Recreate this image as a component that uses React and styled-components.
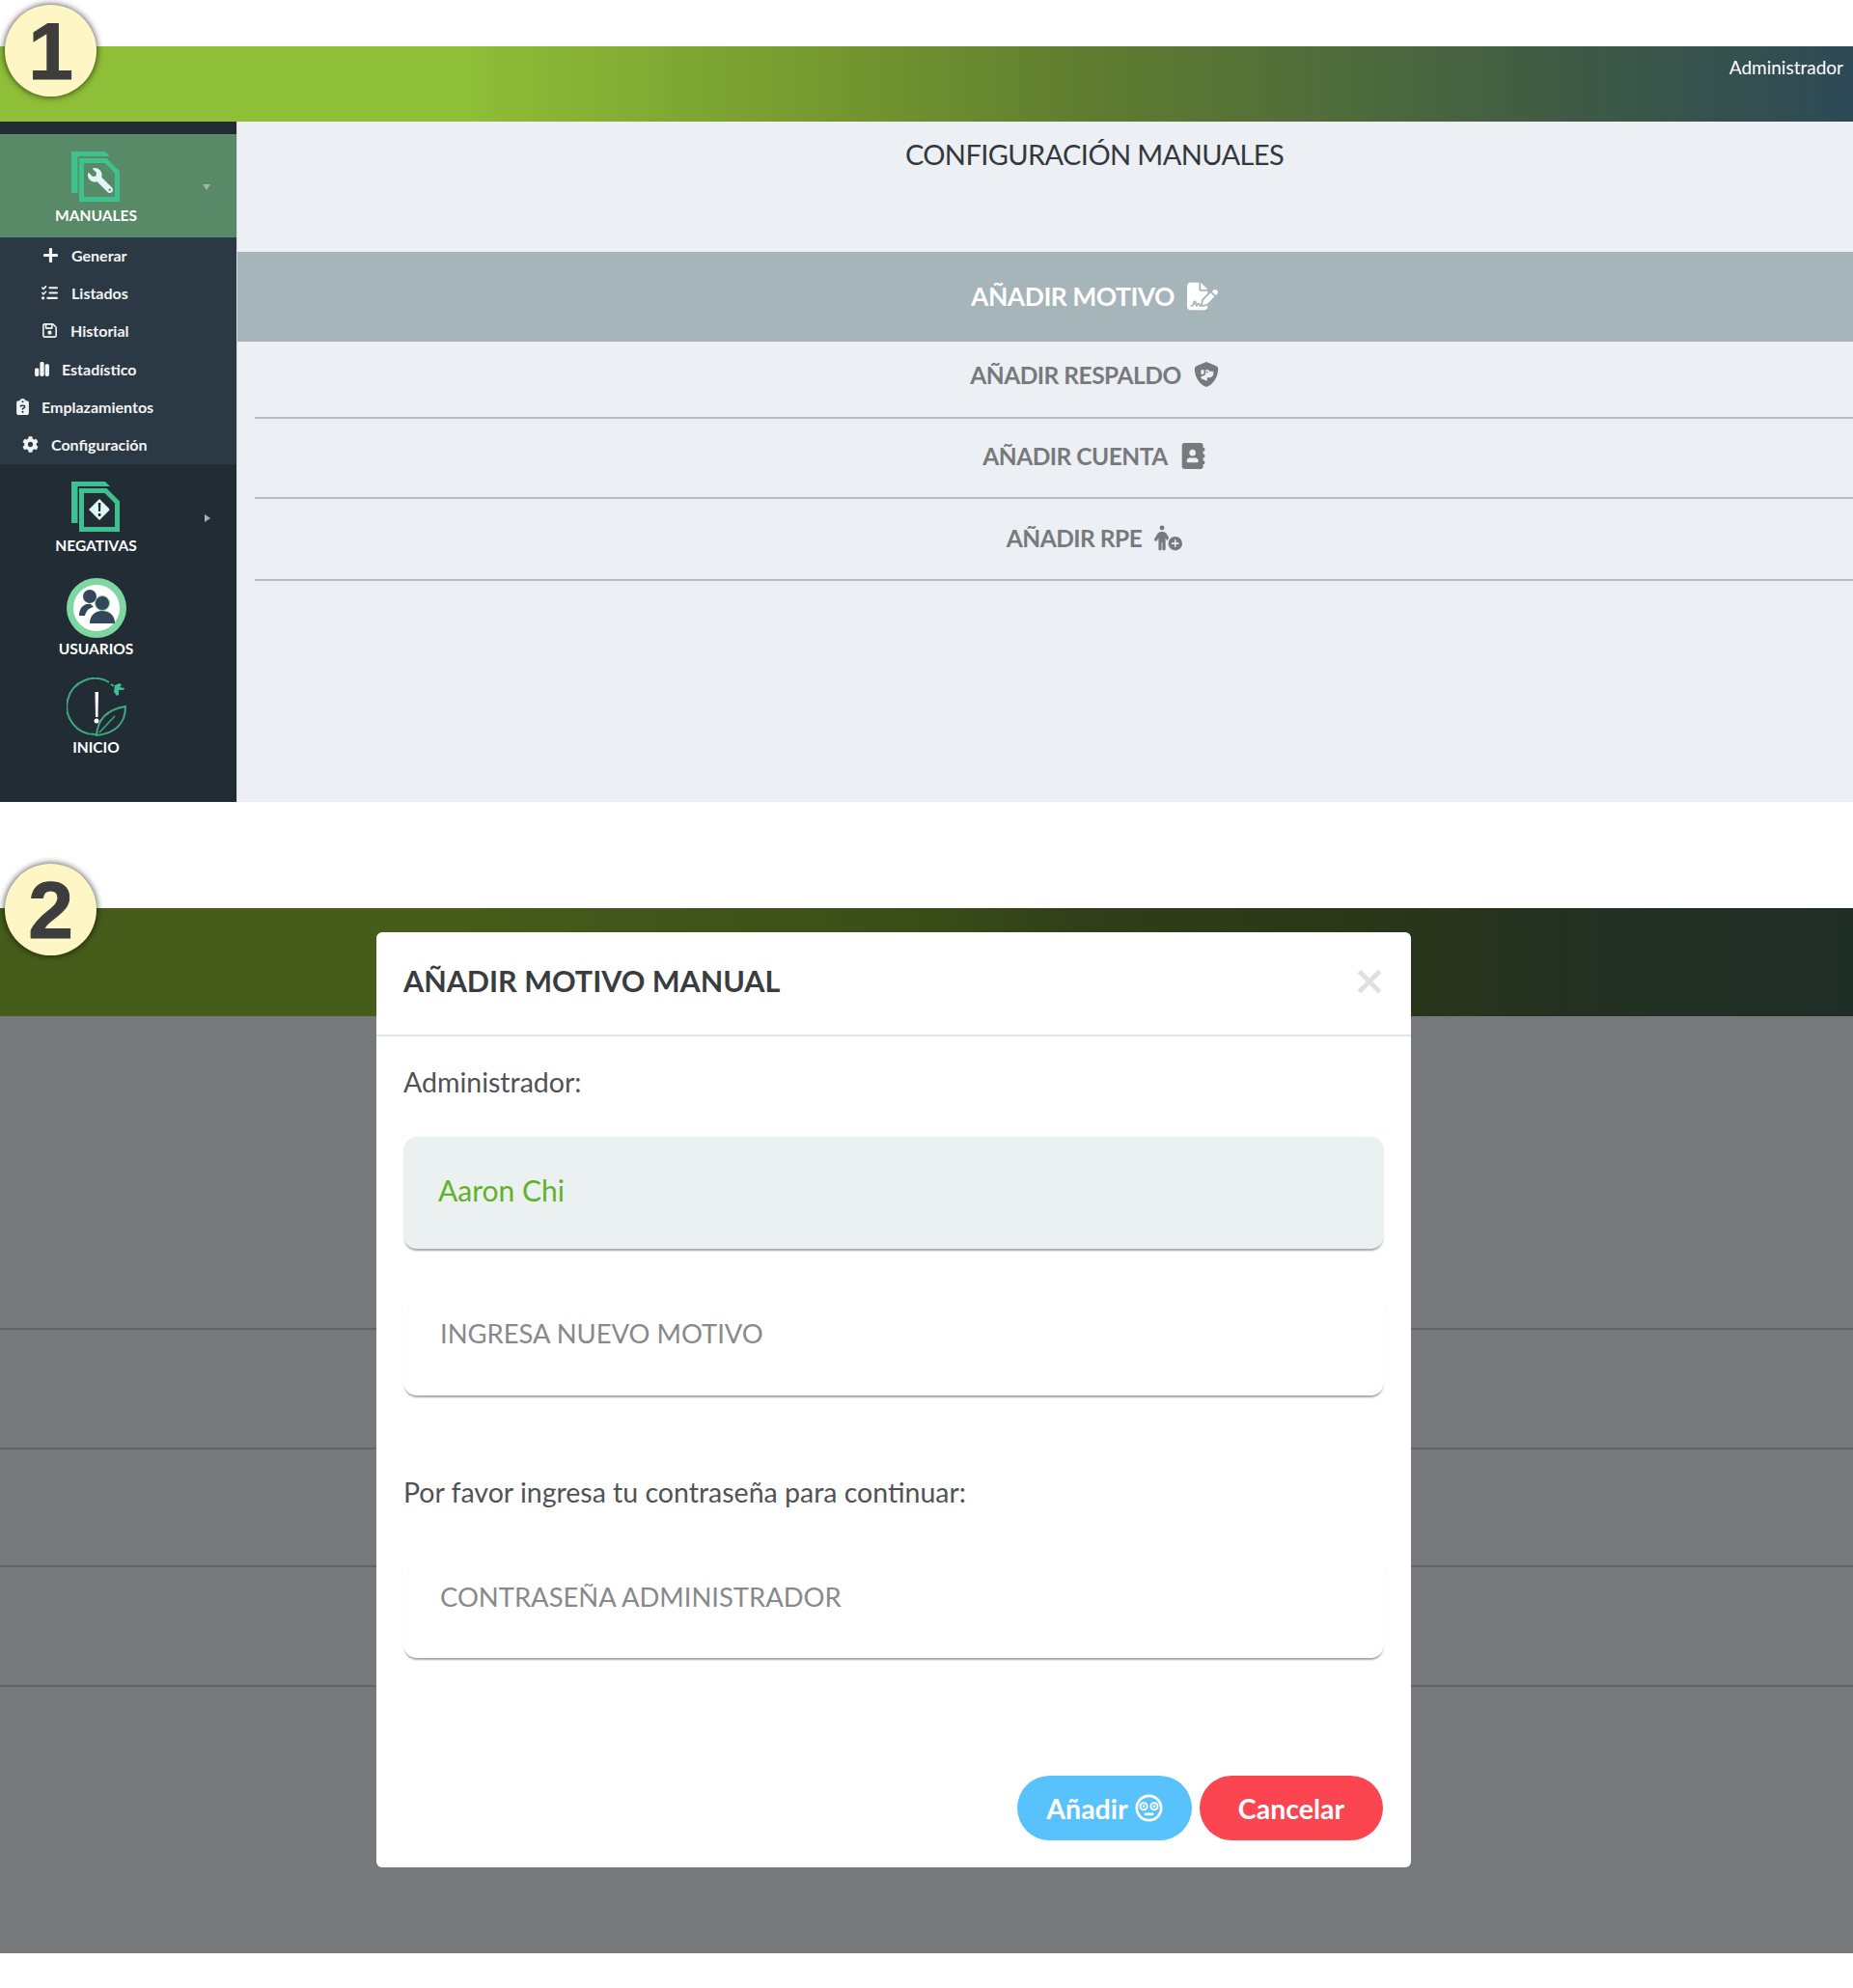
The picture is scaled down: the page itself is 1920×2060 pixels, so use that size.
import React from "react";
import styled, { createGlobalStyle } from "styled-components";
import { FaWrench, FaCog, FaAddressBook, FaRegFlushed, FaPlus } from "react-icons/fa";
import {
  FaListCheck,
  FaRegFloppyDisk,
  FaChartSimple,
  FaClipboardQuestion,
  FaFileSignature,
  FaShieldDog,
  FaPersonCirclePlus,
} from "react-icons/fa6";

const GlobalStyle = createGlobalStyle`
  html, body {
    margin: 0;
    background: #fff;
  }
  * {
    box-sizing: border-box;
  }
`;

const font = `"Lato", "Open Sans", Arial, sans-serif`;

const Page = styled.div`
  width: 1920px;
  height: 2060px;
  font-family: ${font};
  display: flex;
  flex-direction: column;
  overflow: hidden;
`;

const Step = styled.section`
  position: relative;
  padding-top: ${(p) => p.$top}px;
`;

const Badge = styled.div`
  position: absolute;
  left: 5px;
  top: ${(p) => p.$top}px;
  width: 95px;
  height: 95px;
  border-radius: 50%;
  background: #fef7c5;
  box-shadow: 0 0 6px 1px rgba(0, 0, 0, 0.6);
  display: flex;
  align-items: center;
  justify-content: center;
  font-family: "Liberation Sans", Arial, sans-serif;
  font-weight: 700;
  font-size: 84px;
  line-height: 1;
  color: #3d3d3d;
  -webkit-text-stroke: 1px #3d3d3d;
  z-index: 3;
`;

const TopBar = styled.header`
  height: 78px;
  background: linear-gradient(90deg, #8fbe38 0%, #8fbe38 25%, #74982f 45%, #5f7c30 59%, #4e6b3c 73%, #3e5a45 85%, #2d4956 100%);
  color: #fff;
  font-size: 19px;
  display: flex;
  justify-content: flex-end;
  padding: 10px 10px 0 0;
`;

const Layout = styled.div`
  display: flex;
  height: 705px;
`;

const Sidebar = styled.aside`
  width: 245px;
  background: #222c34;
  padding-top: 13px;
  color: #fff;
  display: flex;
  flex-direction: column;
`;

const NavBlock = styled.div`
  position: relative;
  height: ${(p) => p.$h}px;
  background: ${(p) => (p.$active ? "#588a68" : "transparent")};
  display: flex;
  flex-direction: column;
  align-items: center;
  padding: ${(p) => p.$pad}px 46px 0 0;
`;

const NavLabel = styled.span`
  font-size: 15.5px;
  font-weight: 700;
  line-height: 18px;
  margin-top: ${(p) => p.$gap}px;
  text-transform: uppercase;
`;

const Caret = styled.span`
  position: absolute;
  right: 27px;
  top: ${(p) => p.$top}px;
  width: 0;
  height: 0;
  ${(p) =>
    p.$open
      ? `border-left: 4px solid transparent; border-right: 4px solid transparent; border-top: 6px solid #a9b3ad;`
      : `border-top: 4px solid transparent; border-bottom: 4px solid transparent; border-left: 6px solid #a9b3ad;`}
`;

const SubMenu = styled.ul`
  list-style: none;
  margin: 0;
  padding: 0;
  height: 235px;
  background: #2b3945;
`;

const SubItem = styled.li`
  height: 39.2px;
  display: flex;
  align-items: center;
  padding: 0 0 2px ${(p) => p.$left}px;
  gap: ${(p) => p.$gap}px;
  font-size: 16px;
  font-weight: 700;
  color: #f2f4f4;
  svg {
    font-size: 17px;
    flex: none;
  }
`;

const Content = styled.main`
  flex: 1;
  background: #eceff4;
  border-left: 1px solid #d8dbe0;
`;

const Title = styled.h1`
  margin: 0;
  height: 135px;
  padding: 15px 0 0 102px;
  text-align: center;
  font-size: 29px;
  letter-spacing: -0.6px;
  line-height: 38px;
  font-weight: 400;
  color: #33383c;
`;

const ActionList = styled.div`
  display: flex;
  flex-direction: column;
`;

const ActionRow = styled.div`
  height: ${(p) => p.$h}px;
  margin-left: ${(p) => (p.$active ? 0 : 18)}px;
  background: ${(p) => (p.$active ? "#a5b5ba" : "transparent")};
  color: ${(p) => (p.$active ? "#fff" : "#77797c")};
  border-bottom: ${(p) => (p.$active ? "none" : "2px solid #b8bcc0")};
  display: flex;
  align-items: center;
  justify-content: center;
  gap: 13px;
  font-size: ${(p) => (p.$active ? 26.5 : 24.5)}px;
  letter-spacing: -0.5px;
  font-weight: 700;
  padding: 0 0 ${(p) => p.$pb}px ${(p) => (p.$active ? 102 : 84)}px;
`;

const Backdrop = styled.div`
  height: 1083px;
  background: #77787c;
  display: flex;
  flex-direction: column;
`;

const DimBar = styled.div`
  height: 112px;
  background: linear-gradient(90deg, #465c1a 0%, #465c1a 25%, #3a4d18 50%, #303f18 58%, #2a3619 75%, #233022 85%, #1f2d27 100%);
`;

const DimRow = styled.div`
  height: ${(p) => p.$h}px;
  border-bottom: 2px solid #636468;
`;

const Modal = styled.div`
  position: absolute;
  left: 390px;
  top: 135px;
  width: 1072px;
  height: 969px;
  background: #fff;
  border-radius: 6px;
  display: flex;
  flex-direction: column;
`;

const ModalHeader = styled.div`
  height: 108px;
  border-bottom: 2px solid #e4e6e6;
  padding: 0 28px 6px;
  display: flex;
  align-items: center;
  justify-content: space-between;
`;

const ModalTitle = styled.h2`
  margin: 0;
  font-size: 30.5px;
  font-weight: 700;
  color: #3a3d40;
`;

const Close = styled.span`
  font-family: "Open Sans", sans-serif;
  font-size: 56px;
  font-weight: 600;
  line-height: 1;
  margin: -3px -1px 0 0;
  color: #e0e0e0;
`;

const ModalBody = styled.div`
  flex: 1;
  padding: 0 28px;
  display: flex;
  flex-direction: column;
`;

const FieldLabel = styled.p`
  margin: 0;
  margin-top: ${(p) => p.$top}px;
  font-size: 28.5px;
  line-height: 34px;
  color: #505356;
`;

const Field = styled.div`
  height: ${(p) => p.$h}px;
  margin-top: ${(p) => p.$top}px;
  border-radius: 14px;
  background: ${(p) => (p.$filled ? "#ebf0f0" : "#fff")};
  box-shadow: 0 3px 2px -1px #a3a6a5;
  color: ${(p) => (p.$filled ? "#62b12c" : "#88898b")};
  font-size: ${(p) => (p.$filled ? 30 : 27.4)}px;
  display: flex;
  align-items: center;
  padding: 0 0 ${(p) => p.$pb}px ${(p) => (p.$filled ? 36 : 38)}px;
`;

const Footer = styled.div`
  display: flex;
  justify-content: flex-end;
  gap: 8px;
  margin-top: 122px;
  padding-right: 1px;
`;

const Button = styled.button`
  height: 67px;
  width: ${(p) => p.$w}px;
  border: none;
  border-radius: 34px;
  background: ${(p) => p.$bg};
  color: #fff;
  font-family: ${font};
  font-size: 28.5px;
  font-weight: 700;
  display: flex;
  align-items: center;
  justify-content: center;
  gap: 7px;
  svg {
    font-size: 29px;
  }
`;

const DocSvg = styled.svg`
  margin-left: -2px;
  flex: none;
`;

const DocIcon = ({ children }) => (
  <DocSvg width="50" height="52" viewBox="0 0 50 52">
    <path d="M0 0H35l5 5H6.500v38H0z" fill="#3fc08f" />
    <path d="M10.500 9.500H35.500L47.500 21.500V49.500H10.500z" fill="none" stroke="#3fc08f" strokeWidth="5" />
    {children}
  </DocSvg>
);

const UsersIcon = () => (
  <svg width="62" height="62" viewBox="0 0 62 62">
    <circle cx="31" cy="31" r="31" fill="#7ed6a0" />
    <circle cx="31" cy="31" r="24" fill="#fff" />
    <circle cx="24" cy="19" r="7" fill="#33475a" />
    <path d="M13 39c0-8 5-13 12-12l3 3c-5 1-8 4-9 9z" fill="#33475a" />
    <circle cx="37" cy="26" r="7.500" fill="#33475a" stroke="#7ed6a0" strokeWidth="1" />
    <path d="M24 47c0-9 6-13 13-13s13 4 13 13z" fill="#33475a" />
  </svg>
);

const HomeIcon = () => (
  <svg width="62" height="62" viewBox="0 0 62 62">
    <path d="M44 5A29 29 0 1 0 30 59" fill="none" stroke="#3fa97c" strokeWidth="2" />
    <path d="M46 7l3 2" stroke="#3fa97c" strokeWidth="2" />
    <path d="M50 8l5-2 2 2-2 2 5 1-1 2-5 0 0 5-2 1-3-4z" fill="#3fc08f" />
    <path d="M29.500 15h3.500l-.5 26h-2.500z" fill="#fff" />
    <circle cx="31" cy="45" r="2.500" fill="#fff" />
    <path d="M31 60C32 42 44 33 61 30C61 48 50 58 31 60z" fill="none" stroke="#3fa97c" strokeWidth="2" />
    <path d="M34 57L50 40" stroke="#3fa97c" strokeWidth="1.500" />
  </svg>
);

const subItems = [
  { label: "Generar", icon: <FaPlus />, left: 44, gap: 13 },
  { label: "Listados", icon: <FaListCheck />, left: 43, gap: 14 },
  { label: "Historial", icon: <FaRegFloppyDisk />, left: 43, gap: 13 },
  { label: "Estadístico", icon: <FaChartSimple />, left: 35, gap: 12 },
  { label: "Emplazamientos", icon: <FaClipboardQuestion />, left: 15, gap: 11 },
  { label: "Configuración", icon: <FaCog />, left: 23, gap: 13 },
];

export default function App() {
  return (
    <Page>
      <GlobalStyle />
      <Step $top={48}>
        <Badge $top={5}>1</Badge>
        <TopBar>Administrador</TopBar>
        <Layout>
          <Sidebar>
            <NavBlock $active $h={107} $pad={18}>
              <DocIcon>
                <g transform="translate(43 17) scale(-1 1)">
                  <FaWrench size={26} color="#dff7f6" />
                </g>
              </DocIcon>
              <NavLabel $gap={5}>Manuales</NavLabel>
              <Caret $open $top={52} />
            </NavBlock>
            <SubMenu>
              {subItems.map((item) => (
                <SubItem key={item.label} $left={item.left} $gap={item.gap}>
                  {item.icon}
                  {item.label}
                </SubItem>
              ))}
            </SubMenu>
            <NavBlock $h={118} $pad={18}>
              <DocIcon>
                <path d="M29 18l10 10a1.500 1.500 0 0 1 0 2l-10 10-11-11z" fill="#dff7f6" />
                <path d="M27.800 22h2.600l-.3 9h-2zM27.800 33h2.600v3h-2.600z" fill="#222c34" />
              </DocIcon>
              <NavLabel $gap={5}>Negativas</NavLabel>
              <Caret $top={52} />
            </NavBlock>
            <NavBlock $h={103} $pad={0}>
              <UsersIcon />
              <NavLabel $gap={2}>Usuarios</NavLabel>
            </NavBlock>
            <NavBlock $h={100} $pad={0}>
              <HomeIcon />
              <NavLabel $gap={1}>Inicio</NavLabel>
            </NavBlock>
          </Sidebar>
          <Content>
            <Title>CONFIGURACIÓN MANUALES</Title>
            <ActionList>
              <ActionRow $active $h={93} $pb={2}>
                AÑADIR MOTIVO <FaFileSignature size={32} />
              </ActionRow>
              <ActionRow $h={80} $pb={10}>
                AÑADIR RESPALDO <FaShieldDog size={26} />
              </ActionRow>
              <ActionRow $h={83} $pb={5}>
                AÑADIR CUENTA <FaAddressBook size={27} />
              </ActionRow>
              <ActionRow $h={85} $pb={3}>
                AÑADIR RPE <FaPersonCirclePlus size={29} />
              </ActionRow>
            </ActionList>
          </Content>
        </Layout>
      </Step>
      <Step $top={110}>
        <Badge $top={64}>2</Badge>
        <Backdrop>
          <DimBar />
          <DimRow $h={325} />
          <DimRow $h={124} />
          <DimRow $h={122} />
          <DimRow $h={124} />
        </Backdrop>
        <Modal>
          <ModalHeader>
            <ModalTitle>AÑADIR MOTIVO MANUAL</ModalTitle>
            <Close>×</Close>
          </ModalHeader>
          <ModalBody>
            <FieldLabel $top={30}>Administrador:</FieldLabel>
            <Field $filled $h={116} $top={40} $pb={6}>
              Aaron Chi
            </Field>
            <Field $h={107} $top={45} $pb={22}>
              INGRESA NUEVO MOTIVO
            </Field>
            <FieldLabel $top={83}>Por favor ingresa tu contraseña para continuar:</FieldLabel>
            <Field $h={107} $top={48} $pb={20}>
              CONTRASEÑA ADMINISTRADOR
            </Field>
            <Footer>
              <Button $bg="#58c2fd" $w={181}>
                Añadir <FaRegFlushed />
              </Button>
              <Button $bg="#fb4550" $w={190}>
                Cancelar
              </Button>
            </Footer>
          </ModalBody>
        </Modal>
      </Step>
    </Page>
  );
}
